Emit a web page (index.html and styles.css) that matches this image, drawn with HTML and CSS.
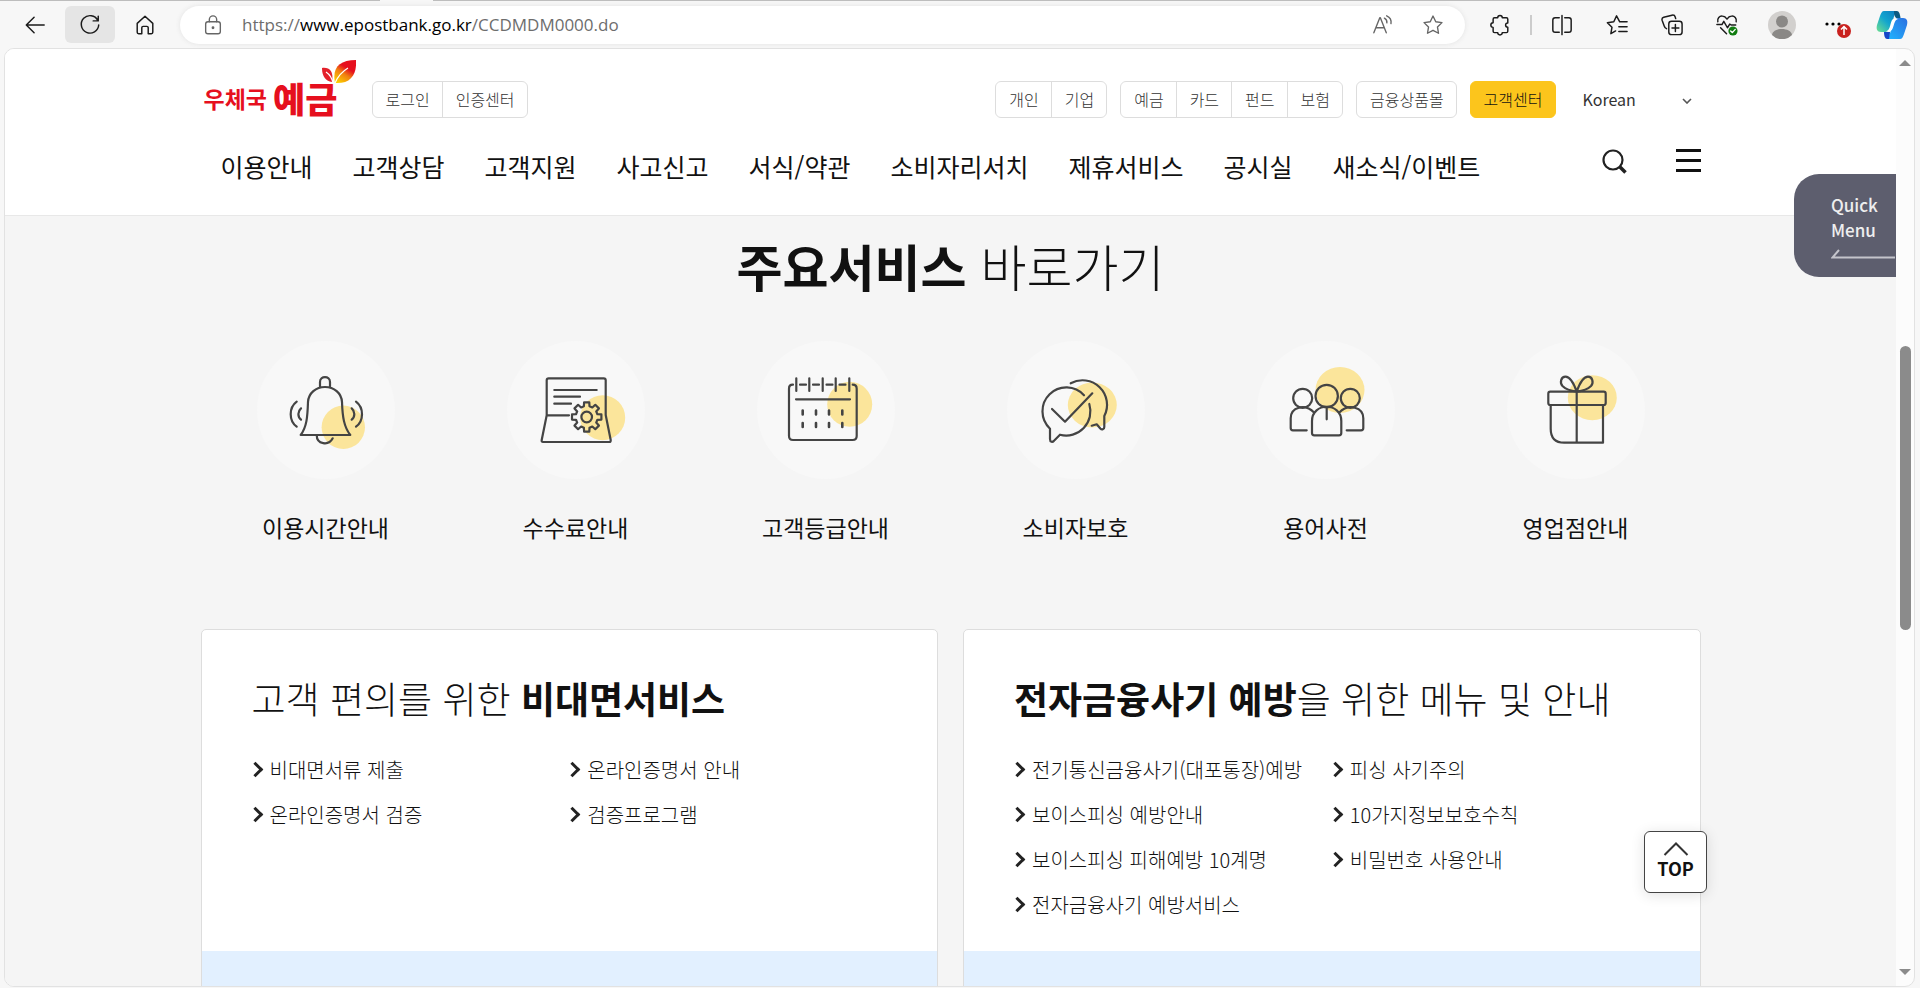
FILE: index.html
```html
<!DOCTYPE html>
<html lang="ko">
<head>
<meta charset="utf-8">
<title>우체국 예금 고객센터</title>
<meta name="viewport" content="width=device-width, initial-scale=1">
<link rel="stylesheet" href="styles.css">
</head>
<body>
<div class="browser">
  <div class="toolbar">
    <span class="active-tab"></span>
    <div class="nav-buttons">
      <button class="tool" aria-label="뒤로"><svg class="ico" viewBox="0 0 24 24"><path d="M22 12H3M11 3.500 2.500 12 11 20.500"/></svg></button>
      <button class="tool tool-active" aria-label="새로 고침"><svg class="ico" viewBox="0 0 24 24"><path d="M20.500 7A9.500 9.500 0 1 0 21.500 12M21 2.500V7.500H15.500"/></svg></button>
      <button class="tool" aria-label="홈"><svg class="ico" viewBox="0 0 24 24"><path d="M3.500 10.200 12 2.500l8.500 7.700V20a1.500 1.500 0 0 1-1.500 1.500h-3.500V15a1.500 1.500 0 0 0-1.500-1.500h-4A1.500 1.500 0 0 0 8.500 15v6.500H5A1.500 1.500 0 0 1 3.500 20z"/></svg></button>
    </div>
    <div class="address">
      <svg class="ico ico-grey" viewBox="0 0 24 24"><rect x="4" y="8.500" width="16" height="13" rx="2.500"/><path d="M8 8.500V6a4 4 0 0 1 8 0v2.500"/><circle cx="12" cy="15" r=".8" fill="#666"/></svg>
      <p class="url">https://<span class="url-host">www.epostbank.go.kr</span>/CCDMDM0000.do</p>
      <button class="tool" aria-label="소리내어 읽기"><svg class="ico ico-grey" viewBox="0 0 24 24"><path d="M2 20.500 8.500 4h.6l6.500 16.500M4.500 15h8.500M13.500 4.500c2 1 3 3 2.700 5.200M16 2c3.500 1.500 5.300 4.700 4.700 8.500"/></svg></button>
      <button class="tool" aria-label="즐겨찾기 추가"><svg class="ico ico-grey" viewBox="0 0 24 24"><path d="m12 2.200 3 6.200 6.800 1-4.900 4.800 1.100 6.800-6-3.200L6 21l1.100-6.800-4.900-4.800 6.800-1z"/></svg></button>
    </div>
    <div class="tools">
      <button class="tool" aria-label="확장"><svg class="ico" viewBox="0 0 24 24"><path d="M9.500 4.200a2.500 2.500 0 0 1 5 0H19a1.500 1.500 0 0 1 1.500 1.500v4a2.400 2.400 0 1 0 0 4.800v4.300a1.500 1.500 0 0 1-1.500 1.500h-4.500a2.500 2.500 0 0 1-5 0H6a1.500 1.500 0 0 1-1.500-1.500v-4.200a2.500 2.500 0 0 1 0-5V5.700A1.500 1.500 0 0 1 6 4.200z"/></svg></button>
      <span class="tool-divider"></span>
      <button class="tool" aria-label="화면 분할"><svg class="ico" viewBox="0 0 24 24"><path d="M9 4H4.500A2.500 2.500 0 0 0 2 6.500v11A2.500 2.500 0 0 0 4.500 20H9M15 4h4.500A2.500 2.500 0 0 1 22 6.500v11a2.500 2.500 0 0 1-2.500 2.500H15M12 1.500v21"/></svg></button>
      <button class="tool" aria-label="즐겨찾기"><svg class="ico" viewBox="0 0 24 24"><path d="M15 8.500 11.500 2 8.500 8.500 1.500 9.500l5 5-1.200 7 5.200-3M15 8.500h8M14 14h9M14 19h9"/></svg></button>
      <button class="tool" aria-label="컬렉션"><svg class="ico" viewBox="0 0 24 24"><rect x="8.500" y="8" width="14.500" height="14.500" rx="3"/><path d="M15.700 11.500v7.500M12 15.200h7.500M6 16c-1.500-.5-2-1.500-2.500-3L1.300 7c-.6-1.800.2-3 1.700-3.500L12 1.300c1.800-.4 3 .2 3.500 2L16 5"/></svg></button>
      <button class="tool" aria-label="브라우저 기본 정보"><svg class="ico" viewBox="0 0 24 24"><path d="M2 8.500C1 4.500 4 1.800 7 2.200c2.200.2 3.800 1.500 5 3.300 1.200-1.800 2.800-3.100 5-3.300 3-.4 6 2.300 5 6.300M1 11.500h5.500l2-3.500 4 7 2.500-4 1.500 1h5M5 15l6.500 6.500"/><circle cx="18.500" cy="18.500" r="5" fill="#107c10" stroke="none"/><path class="stroke-white" d="m16 18.500 1.800 1.800 3.200-3.500"/></svg></button>
      <button class="tool" aria-label="프로필"><svg class="avatar" viewBox="0 0 28 28"><circle cx="14" cy="14" r="14" fill="#d2d0ce"/><circle cx="14" cy="10.500" r="6" fill="#8a8886"/><path d="M4 24c1-8 19-8 20 0a14 14 0 0 1-20 0z" fill="#8a8886"/></svg></button>
      <button class="tool" aria-label="설정 및 기타"><svg class="more" viewBox="0 0 28 28"><circle cx="4" cy="13" r="1.600"/><circle cx="10" cy="13" r="1.600"/><circle cx="16" cy="13" r="1.600"/><circle cx="21" cy="20" r="7" fill="#c9211e"/><path class="stroke-white" d="M21 24v-8M18 18.500l3-3 3 3"/></svg></button>
      <button class="tool" aria-label="Copilot"><svg class="copilot" viewBox="0 0 32 30">
        <defs><linearGradient id="cpA" x1="0" y1="1" x2="1" y2="0"><stop offset="0" stop-color="#6fe08f"/><stop offset=".5" stop-color="#12a5cf"/><stop offset="1" stop-color="#0c7bc0"/></linearGradient><linearGradient id="cpB" x1="0" y1="1" x2="1" y2="0"><stop offset="0" stop-color="#1fb6ff"/><stop offset="1" stop-color="#2c6fe0"/></linearGradient></defs>
        <path d="M8 1h13c-2 2-3 5-4 9l-2 7c-1 3-3 5-7 5H5c-4 0-5-3-4-7L4 6c1-3 2-5 4-5z" fill="url(#cpA)"/>
        <path d="M24 29H11c2-2 3-5 4-9l2-7c1-3 3-5 7-5h3c4 0 5 3 4 7l-3 9c-1 3-2 5-4 5z" fill="url(#cpB)"/>
        <path d="M17 9h5c-3 1-3.500 4-4.500 7-.9 3-2 5.500-4.500 5.500h-3c2.500-1 3.500-3 4.200-6 .7-2.500 1-5 2.800-6.500z" fill="#fff"/>
        <path d="M18 1h3c2 0 3 3 3.500 7H20c-2-2-2-5-2-7z" fill="#0b5a82"/><path d="M8 22h6c0 3-1 5-1 7h-2c-2 0-3-3-3-7z" fill="#1746c8"/>
      </svg></button>
    </div>
  </div>

  <div class="window">
    <div class="page">
      <header class="header">
        <div class="container">
          <div class="header-top">
            <a class="logo" href="#"><span class="logo-small">우체국</span><span class="logo-big">예금</span>
              <svg class="logo-leaf" viewBox="0 0 34 24"><defs><linearGradient id="leaf" x1=".2" y1="1" x2=".8" y2="0"><stop offset="0" stop-color="#fdd000"/><stop offset=".4" stop-color="#f08010"/><stop offset=".65" stop-color="#e60f1e"/></linearGradient></defs><path d="M34 0c1 14-5 24-21 23C10 8 17 0 34 0z" fill="url(#leaf)"/><path d="M0 8c7-1 12 3 10 14C4 21 0 17 0 8z" fill="#e3202a"/><path d="M4 12c3 2 6 6 7 11M26 8c-5 3-10 8-13 15" fill="none" stroke="#fff" stroke-width="1.300"/></svg>
            </a>
            <div class="pill-group"><a href="#">로그인</a><a href="#">인증센터</a></div>
            <div class="utility">
              <div class="pill-group"><a href="#">개인</a><a href="#">기업</a></div>
              <div class="pill-group"><a href="#">예금</a><a href="#">카드</a><a href="#">펀드</a><a href="#">보험</a></div>
              <div class="pill-group"><a href="#">금융상품몰</a></div>
              <div class="pill-group pill-current"><a href="#">고객센터</a></div>
              <div class="language">
                <select class="language-select" aria-label="언어"><option>Korean</option></select>
                <svg class="language-arrow" viewBox="0 0 10 6"><path d="m1 1 4 4 4-4"/></svg>
              </div>
            </div>
          </div>
          <div class="header-nav">
            <nav class="menu">
              <a href="#">이용안내</a><a href="#">고객상담</a><a href="#">고객지원</a><a href="#">사고신고</a><a href="#">서식/약관</a><a href="#">소비자리서치</a><a href="#">제휴서비스</a><a href="#">공시실</a><a href="#">새소식/이벤트</a>
            </nav>
            <div class="menu-actions">
              <button class="icon-button" aria-label="검색"><svg class="search" viewBox="0 0 26 26"><circle cx="11" cy="11" r="9.500"/><path d="m17.500 17.500 6 6" stroke-width="3.500"/></svg></button>
              <button class="icon-button burger" aria-label="전체메뉴"><span></span><span></span><span></span></button>
            </div>
          </div>
        </div>
      </header>

      <main class="container">
        <section class="services">
          <h2 class="services-title"><strong>주요서비스</strong> 바로가기</h2>
          <div class="service-list">
            <a class="service" href="#"><svg class="service-icon" viewBox="0 0 138 138"><circle class="dot" cx="86.300" cy="86.300" r="21.700"/><path d="M43.700 94c6-8 6.800-18 7.300-33 .5-9 8-15 17-15s16.500 6 17 15c.5 15 2 25 8.300 33zM63 46v-5c0-6.500 10-6.500 10 0v5M59.700 94c0 9.500 12 11 16 3.300M39.700 60.700c-8 6-8 19 0 25M44 67.300c-3.500 3-3.500 8.500 0 11.400M94.700 67.300c3.500 3 3.500 8.500 0 11.400M99 60.700c8 6 8 19 0 25"/></svg><span>이용시간안내</span></a>
            <a class="service" href="#"><svg class="service-icon" viewBox="0 0 138 138"><circle class="dot" cx="95.700" cy="76.700" r="22.500"/><path d="M39.700 74V39.300q0-2 2-2h55q2 0 2 2V74l5 25q.3 2-1.500 2H36q-1.700 0-1.300-2l5-24.700H62M47.300 49h42.400M47.300 55.700H73M47.300 62.700H64"/><circle cx="79.700" cy="76" r="5.300"/><path transform="translate(79.700 76)" d="M10.700-2.800 14.700-2.600 14.700 2.600 10.700 2.800 9.500 5.600 12.200 8.600 8.600 12.200 5.600 9.500 2.800 10.700 2.600 14.700-2.600 14.700-2.800 10.700-5.600 9.500-8.600 12.200-12.200 8.600-9.500 5.600-10.700 2.800-14.700 2.600-14.700-2.600-10.700-2.800-9.500-5.600-12.200-8.600-8.600-12.200-5.600-9.500-2.800-10.700-2.600-14.700 2.600-14.700 2.800-10.700 5.600-9.500 8.600-12.200 12.200-8.600 9.500-5.600Z"/></svg><span>수수료안내</span></a>
            <a class="service" href="#"><svg class="service-icon" viewBox="0 0 138 138"><circle class="dot" cx="92.700" cy="63.300" r="22.500"/><path d="M36 43.700h-.3q-3.700 0-3.700 4V95q0 4 4 4h59.700q4 0 4-4V47.700q0-4-4-4M43 43.700h6M56 43.700h6M69.500 43.700h6M82.500 43.700h6M39.300 37.300V50M52.300 37.300V50M65.700 37.300V50M78.700 37.300V50M92.300 37.300V50M39 58.300h54"/><path stroke-width="2.600" d="M45.700 69.500v4M59 69.500v4M72 69.500v4M85.300 69.500v4M45.700 82v4M59 82v4M72 82v4M85.300 82v4"/></svg><span>고객등급안내</span></a>
            <a class="service" href="#"><svg class="service-icon" viewBox="0 0 138 138"><ellipse class="dot" cx="85.300" cy="64" rx="24.500" ry="22.500"/><path d="M77 54.300A23.850 23.850 0 1 0 43 87.700V98c0 3.300 2.500 3.500 4 1.700l6-6A24.200 24.200 0 0 0 82.300 63M45 68l13 12.700 27.300-28.400M63.700 42.300A24.500 24.500 0 0 1 97.300 75v11c0 2.500-2.500 3-4 1.500l-3.600-4.200-5 1.400"/></svg><span>소비자보호</span></a>
            <a class="service" href="#"><svg class="service-icon" viewBox="0 0 138 138"><ellipse class="dot" cx="83" cy="49" rx="24.500" ry="23"/><circle cx="45.700" cy="57.300" r="9.500"/><circle cx="69.700" cy="55" r="11.200"/><circle cx="93.300" cy="57.300" r="9.500"/><path d="M49.700 89.300H36q-2.300 0-2.300-2.300V77.300c0-11 14-15.300 23.600-5.600M55 92V80c0-19 29.300-19 29.300 0v12q0 2.300-2.300 2.300H57.300Q55 94.300 55 92zM69.700 66v12.300M89.700 89.300H104q2.300 0 2.300-2.300V77.300c0-11-14.600-15.300-24.300-5.600"/></svg><span>용어사전</span></a>
            <a class="service" href="#"><svg class="service-icon" viewBox="0 0 138 138"><ellipse class="dot" cx="85.300" cy="56.700" rx="24.500" ry="22.500"/><rect x="41.300" y="50.700" width="57.400" height="13.300" rx="2"/><path d="M43.700 64v23.700q0 14 13.500 14H96V64M69.700 50.700v51M69.700 50.700C67 43 63 35.700 58.500 35.700c-4.500 0-6 6-3 9.300 3.500 3.500 9 5 14.200 5.700zM69.700 50.700C72.400 43 76.400 35.700 81 35.700c4.500 0 6 6 3 9.300-3.500 3.500-9 5-14.300 5.700z"/></svg><span>영업점안내</span></a>
          </div>
        </section>

        <div class="cards">
          <section class="card">
            <div class="card-body">
              <h3 class="card-title">고객 편의를 위한 <strong>비대면서비스</strong></h3>
              <ul class="links">
                <li><a href="#">비대면서류 제출</a></li><li><a href="#">온라인증명서 안내</a></li>
                <li><a href="#">온라인증명서 검증</a></li><li><a href="#">검증프로그램</a></li>
              </ul>
            </div>
            <div class="card-foot"></div>
          </section>
          <section class="card">
            <div class="card-body">
              <h3 class="card-title"><strong>전자금융사기 예방</strong>을 위한 메뉴 및 안내</h3>
              <ul class="links">
                <li><a href="#">전기통신금융사기(대포통장)예방</a></li><li><a href="#">피싱 사기주의</a></li>
                <li><a href="#">보이스피싱 예방안내</a></li><li><a href="#">10가지정보보호수칙</a></li>
                <li><a href="#">보이스피싱 피해예방 10계명</a></li><li><a href="#">비밀번호 사용안내</a></li>
                <li><a href="#">전자금융사기 예방서비스</a></li>
              </ul>
            </div>
            <div class="card-foot"></div>
          </section>
        </div>
      </main>

      <button class="quick">Quick<br>Menu
        <svg class="quick-arrow" viewBox="0 0 64 10"><path d="M64 8.500H1.500L8 1"/></svg>
      </button>
      <button class="top"><svg class="top-arrow" viewBox="0 0 26 14"><path d="M1.500 13 13 1.500 24.500 13"/></svg>TOP</button>
    </div>
    <div class="scrollbar">
      <svg class="scroll-arrow" viewBox="0 0 12 6"><path d="M0 6 6 0l6 6z"/></svg>
      <div class="scroll-track"><span class="scroll-thumb"></span></div>
      <svg class="scroll-arrow" viewBox="0 0 12 6"><path d="m0 0 6 6 6-6z"/></svg>
    </div>
  </div>
</div>
</body>
</html>
```
FILE: styles.css
```css
* { box-sizing: border-box; }

body {
  margin: 0;
  font-family: "Noto Sans CJK KR", "Noto Sans", sans-serif;
  color: #111;
}

a { color: inherit; text-decoration: none; }

button {
  margin: 0;
  padding: 0;
  border: 0;
  background: none;
  color: inherit;
  font: inherit;
}

svg { display: block; flex: none; }

/* browser frame */
.browser {
  display: flex;
  flex-direction: column;
  height: 100vh;
  overflow: hidden;
  background: #f7f7f7;
}

.toolbar {
  position: relative;
  display: flex;
  align-items: center;
  flex: none;
  height: 48px;
  padding: 0 3px 0 10px;
  border-top: 1px solid #bdbdbd;
}

.active-tab {
  position: absolute;
  top: -1px;
  left: 380px;
  width: 53px;
  height: 1px;
  background: #f7f7f7;
}

.nav-buttons { display: flex; gap: 5px; margin-right: 10px; }

.tool {
  display: flex;
  align-items: center;
  justify-content: center;
  width: 50px;
  height: 37px;
  border-radius: 6px;
}

.tool-active { background: #e5e5e5; }

.ico {
  width: 22px;
  height: 22px;
  fill: none;
  stroke: #1b1b1b;
  stroke-width: 1.600;
  stroke-linecap: round;
  stroke-linejoin: round;
}

.ico-grey { stroke: #666; stroke-width: 1.500; }

.stroke-white {
  fill: none;
  stroke: #fff;
  stroke-width: 1.500;
}

.address {
  display: flex;
  align-items: center;
  flex: 1;
  height: 38px;
  padding: 0 7px 0 22px;
  border-radius: 19px;
  background: #fff;
  box-shadow: 0 0 5px #e2e2e2;
}

.url {
  flex: 1;
  margin: 0 0 0 18px;
  font-family: "Open Sans", sans-serif;
  font-size: 17px;
  color: #6d6d6d;
}

.url-host { color: #000; }

.tools { display: flex; align-items: center; gap: 5px; padding-left: 10px; }

.tool-divider { width: 2px; height: 20px; background: #ccc; }

.avatar { width: 28px; height: 28px; }
.more { width: 28px; height: 28px; }
.copilot { width: 32px; height: 30px; }

.window {
  display: flex;
  flex: 1;
  min-height: 0;
  margin: 0 5px 1px 4px;
  border: 1px solid #e2e2e2;
  border-radius: 10px;
  overflow: hidden;
  background: #fcfcfc;
}

.page {
  position: relative;
  flex: 1;
  overflow: hidden;
  background: #f5f5f5;
}

.scrollbar {
  display: flex;
  flex-direction: column;
  align-items: center;
  width: 18px;
  padding: 11px 0;
}

.scroll-arrow { width: 12px; height: 6px; fill: #8b8b8b; }

.scroll-track { flex: 1; padding-top: 280px; }

.scroll-thumb {
  display: block;
  width: 11px;
  height: 284px;
  border-radius: 6px;
  background: #8b8b8b;
}

/* site header */
.container {
  max-width: 1500px;
  margin: 0 auto;
}

.header {
  border-bottom: 1px solid #e8e8e8;
  background: #fff;
}

.header-top {
  display: flex;
  align-items: flex-end;
  padding-top: 11px;
}

.logo {
  position: relative;
  display: flex;
  align-items: center;
  gap: 6px;
  width: 171px;
  height: 58px;
  padding: 18px 0 0 3px;
  line-height: 40px;
  font-weight: 700;
  color: #e60f1e;
}

.logo-small { font-size: 23px; }
.logo-big { font-size: 35px; font-weight: 900; }

.logo-leaf {
  position: absolute;
  top: 0;
  left: 121px;
  width: 34px;
  height: 24px;
}

.pill-group {
  display: flex;
  height: 37px;
  border: 1px solid #ddd;
  border-radius: 6px;
  font-size: 16px;
  font-weight: 300;
  line-height: 34px;
  color: #333;
}

.pill-group a { padding: 0 12px 0 13px; }
.pill-group a + a { border-left: 1px solid #ddd; }

.pill-current {
  border-color: #fcc51c;
  background: #fcc51c;
  color: #111;
}

.utility {
  display: flex;
  gap: 13px;
  margin-left: auto;
}

.language {
  position: relative;
  width: 132px;
}

.language-select {
  width: 100%;
  height: 36px;
  padding: 0 14px;
  border: 0;
  background: none;
  appearance: none;
  font-family: inherit;
  font-size: 16px;
  color: #333;
}

.language-arrow {
  position: absolute;
  top: 17px;
  right: 9px;
  width: 10px;
  height: 6px;
  fill: none;
  stroke: #555;
  stroke-width: 1.600;
}

.header-nav {
  display: flex;
  justify-content: space-between;
  height: 97px;
  padding-left: 20px;
}

.menu {
  display: flex;
  align-items: center;
  gap: 40px;
  padding-bottom: 2px;
  font-size: 25px;
  font-weight: 400;
}

.menu-actions {
  display: flex;
  align-items: flex-start;
  gap: 48px;
  padding-top: 31px;
}

.search {
  width: 26px;
  height: 26px;
  fill: none;
  stroke: #222;
  stroke-width: 2.200;
}

.burger {
  display: flex;
  flex-direction: column;
  gap: 7px;
  width: 25px;
}

.burger span { height: 3px; background: #111; }

/* main services */
.services-title {
  margin: 0;
  padding-top: 18px;
  font-size: 50px;
  font-weight: 300;
  line-height: 62px;
  text-align: center;
}

strong { font-weight: 700; }

.service-list {
  display: grid;
  grid-template-columns: repeat(6, 1fr);
  padding-top: 45px;
}

.service {
  display: flex;
  flex-direction: column;
  align-items: center;
  gap: 32px;
  font-size: 23px;
  font-weight: 400;
  line-height: 32px;
}

.service-icon {
  width: 138px;
  height: 138px;
  border-radius: 50%;
  background: #f8f8f8;
  fill: none;
  stroke: #444;
  stroke-width: 2.200;
  stroke-linecap: round;
  stroke-linejoin: round;
}

.dot { fill: #fbe59b; stroke: none; }

/* cards */
.cards {
  display: grid;
  grid-template-columns: 1fr 1fr;
  gap: 25px;
  padding-top: 86px;
}

.card {
  display: flex;
  flex-direction: column;
  border: 1px solid #ddd;
  border-radius: 5px;
  overflow: hidden;
  background: #fff;
}

.card-body { flex: 1; padding: 38px 50px 24px; }

.card-title {
  margin: 0;
  font-size: 37px;
  font-weight: 300;
  line-height: 60px;
  white-space: nowrap;
}

.links {
  display: grid;
  grid-template-columns: 1fr 1fr;
  margin: 0;
  padding: 19px 0 0;
  list-style: none;
  font-size: 20px;
  font-weight: 300;
  line-height: 45px;
  white-space: nowrap;
}

.links a { display: flex; align-items: center; gap: 9px; }

.links a::before {
  content: "";
  width: 8px;
  height: 8px;
  margin-left: -2px;
  border: solid #222;
  border-width: 3px 3px 0 0;
  transform: rotate(45deg);
}

.card-foot { height: 160px; background: #e2f0ff; }

/* floating buttons */
.quick {
  position: absolute;
  top: 125px;
  right: 0;
  width: 102px;
  height: 103px;
  padding-left: 37px;
  border-radius: 25px 0 0 25px;
  background: #5d5e6e;
  font-size: 17px;
  font-weight: 500;
  line-height: 25px;
  text-align: left;
  color: #eee;
}

.quick-arrow {
  width: 64px;
  height: 10px;
  margin-top: 7px;
  fill: none;
  stroke: #c4c4cb;
  stroke-width: 2;
}

.top {
  position: absolute;
  right: 189px;
  bottom: 93px;
  display: flex;
  flex-direction: column;
  align-items: center;
  justify-content: center;
  width: 63px;
  height: 62px;
  padding-bottom: 2px;
  border: 1px solid #444;
  border-radius: 6px;
  background: #fff;
  box-shadow: 0 2px 14px #0000001f;
  font-size: 18px;
  font-weight: 700;
  line-height: 24px;
}

.top-arrow {
  width: 26px;
  height: 14px;
  fill: none;
  stroke: #333;
  stroke-width: 2;
}
```
